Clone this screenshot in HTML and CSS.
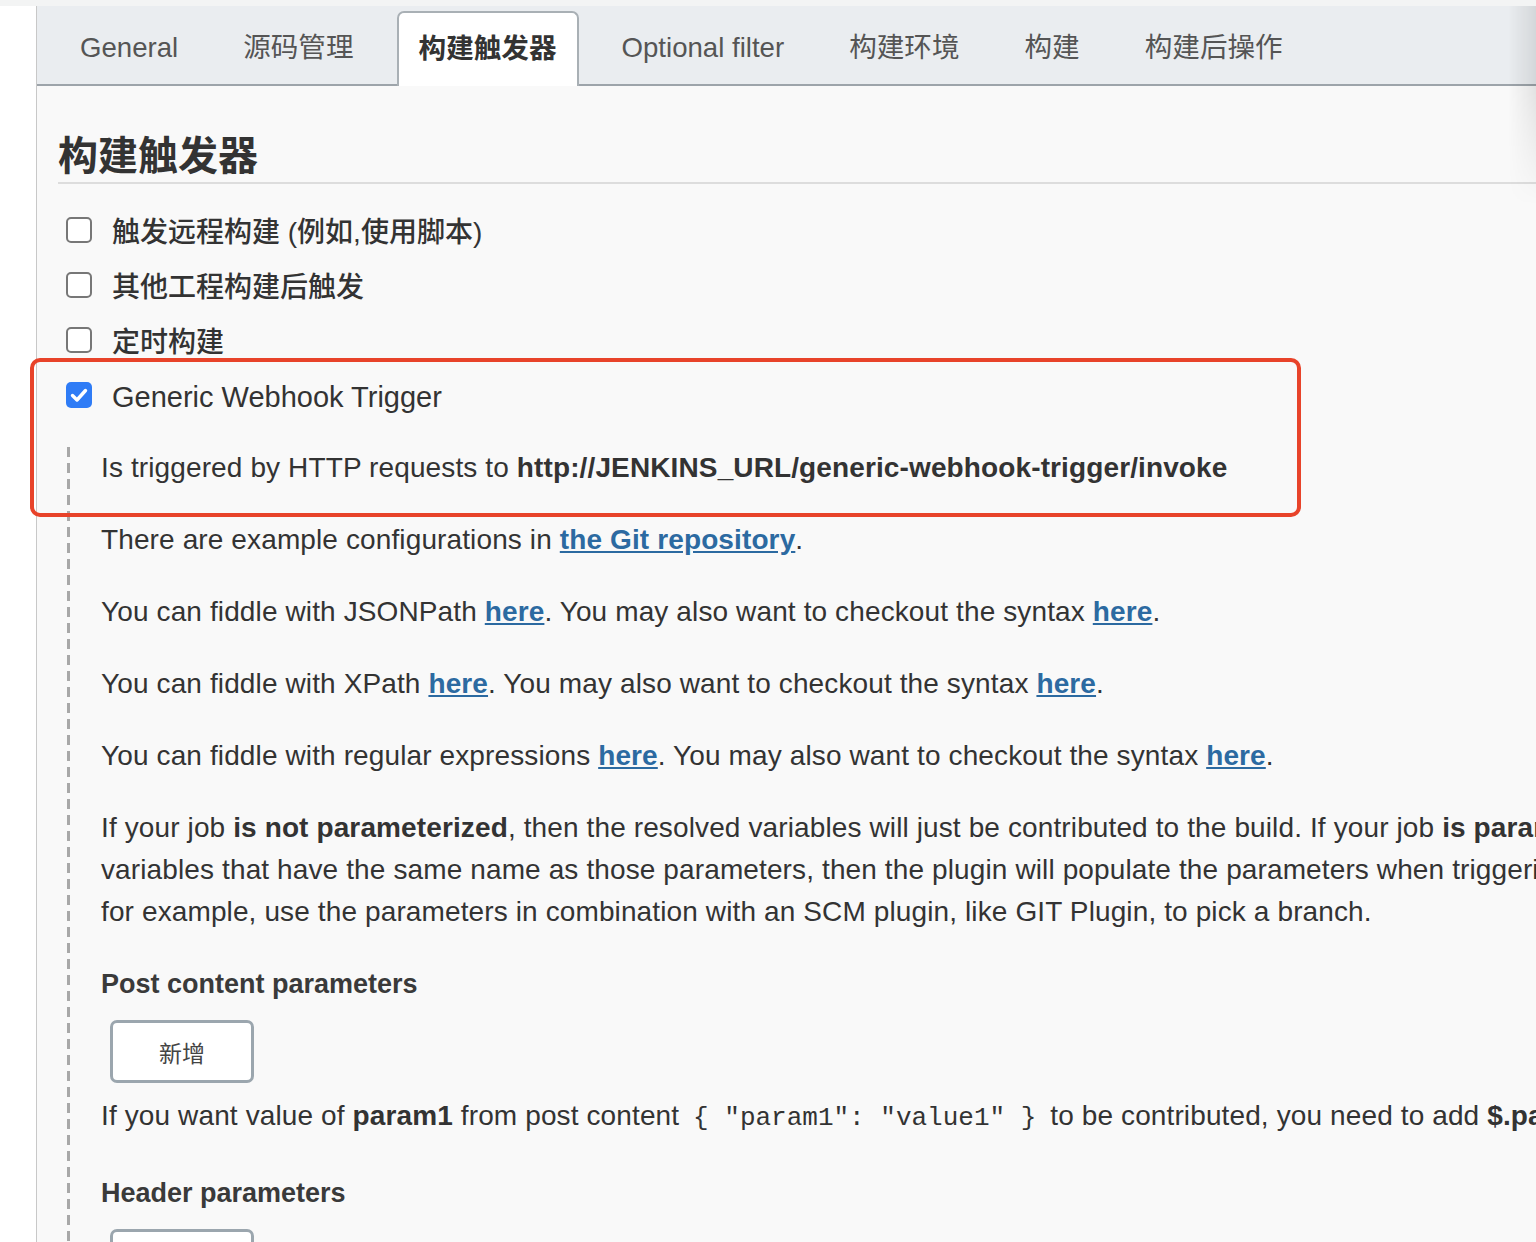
FILE: index.html
```html
<!DOCTYPE html>
<html lang="zh-CN">

<head>
    <meta charset="UTF-8">
    <meta name="viewport" content="width=device-width, initial-scale=1.0">
    <title>构建触发器</title>
    <link rel="stylesheet" href="styles.css">
</head>

<body>
    <div class="topbar"></div>
    <div class="page">
        <div class="tabs">
            <div class="tab">General</div>
            <div class="tab">源码管理</div>
            <div class="tab active">构建触发器</div>
            <div class="tab">Optional filter</div>
            <div class="tab">构建环境</div>
            <div class="tab">构建</div>
            <div class="tab">构建后操作</div>
        </div>

        <div class="content">
            <h2 class="section-title">构建触发器</h2>

            <div class="opts">
                <div class="opt">
                    <span class="check"></span>
                    <span class="opt-label">触发远程构建 (例如,使用脚本)</span>
                </div>
                <div class="opt">
                    <span class="check"></span>
                    <span class="opt-label">其他工程构建后触发</span>
                </div>
                <div class="opt">
                    <span class="check"></span>
                    <span class="opt-label">定时构建</span>
                </div>
                <div class="opt">
                    <span class="check checked">
                        <svg viewBox="0 0 26 26" width="26" height="26">
                            <path d="M6.5 13.5 L11 18 L19.5 8.5" fill="none" stroke="#fff" stroke-width="3.4" stroke-linecap="round" stroke-linejoin="round" />
                        </svg>
                    </span>
                    <span class="opt-label en">Generic Webhook Trigger</span>
                </div>
            </div>

            <div class="nested">
                <p>Is triggered by HTTP requests to <b>http://JENKINS_URL/generic-webhook-trigger/invoke</b></p>
                <p>There are example configurations in <a href="#">the Git repository</a>.</p>
                <p>You can fiddle with JSONPath <a href="#">here</a>. You may also want to checkout the syntax <a href="#">here</a>.</p>
                <p>You can fiddle with XPath <a href="#">here</a>. You may also want to checkout the syntax <a href="#">here</a>.</p>
                <p>You can fiddle with regular expressions <a href="#">here</a>. You may also want to checkout the syntax <a href="#">here</a>.</p>
                <p>If your job <b>is not parameterized</b>, then the resolved variables will just be contributed to the build. If your job <b>is parameterized</b>, and you resolve<br>variables that have the same name as those parameters, then the plugin will populate the parameters when triggering the job. That means you can,<br>for example, use the parameters in combination with an SCM plugin, like GIT Plugin, to pick a branch.</p>

                <h4 class="sub-title">Post content parameters</h4>
                <button class="btn">新增</button>
                <p class="after-btn">If you want value of <b>param1</b> from post content <code>{ "param1": "value1" }</code> to be contributed, you need to add <b>$.param1</b> as expression.</p>

                <h4 class="sub-title">Header parameters</h4>
                <button class="btn">新增</button>
            </div>
        </div>
        <div class="edge-shade"></div>
    </div>

    <!-- 红色标注框 -->
    <div class="mark"></div>
</body>

</html>
```

FILE: styles.css
```css
* {
    padding: 0;
    margin: 0;
    box-sizing: border-box;
}

body {
    background-color: #fff;
    font-family: "Liberation Sans", Arial, "Noto Sans CJK SC", sans-serif;
    color: #333;
    overflow: hidden;
    height: 1242px;
    position: relative;
}

.topbar {
    height: 6px;
    background-color: #f3f4f4;
}

.page {
    margin-left: 36px;
    border-left: 1px solid #c8c8c8;
    background-color: #f9f9f9;
    height: 1236px;
    position: relative;
    overflow: hidden;
}

/* 顶部标签 */
.tabs {
    display: flex;
    align-items: flex-end;
    gap: 21px;
    height: 80px;
    padding-left: 21px;
    background-color: #eaedf0;
    border-bottom: 2px solid #9da4aa;
}

.tab {
    height: 78px;
    line-height: 80px;
    padding: 0 22px;
    font-size: 27.6px;
    color: #555;
    margin-bottom: -2px;
    white-space: nowrap;
}

.tab.active {
    height: 75px;
    line-height: 72px;
    background-color: #fff;
    border: 2px solid #a9b0b5;
    border-bottom: none;
    border-radius: 7px 7px 0 0;
    color: #333;
    font-weight: bold;
    padding: 0 20px;
}

.content {
    padding: 44px 0 0 21px;
}

.section-title {
    font-size: 40px;
    font-weight: bold;
    color: #333;
    height: 54px;
    line-height: 52px;
    border-bottom: 2px solid #ddd;
}

.opts {
    margin-top: 18px;
}

.opt {
    display: flex;
    align-items: center;
    height: 55px;
    padding-left: 8px;
}

.check {
    width: 26px;
    height: 26px;
    border: 2px solid #777;
    border-radius: 5px;
    background-color: #fff;
    flex-shrink: 0;
}

.check.checked {
    border: none;
    background-color: #2f7cf6;
}

.check svg {
    display: block;
}

.opt-label {
    margin-left: 20px;
    font-size: 28px;
    font-weight: 500;
    color: #333;
}

.opt-label.en {
    font-size: 29px;
    line-height: 34px;
    padding-top: 4px;
}

/* 虚线缩进区域 */
.nested {
    margin-left: 9px;
    margin-top: 25px;
    padding-left: 34px;
    padding-bottom: 40px;
    position: relative;
}

.nested::before {
    content: "";
    position: absolute;
    left: 0;
    top: 0;
    bottom: 0;
    width: 3px;
    background: repeating-linear-gradient(to bottom, #a8a8a8 0, #a8a8a8 10px, transparent 10px, transparent 16px);
}

.nested p {
    font-size: 28px;
    letter-spacing: 0.12px;
    line-height: 42px;
    margin-bottom: 30px;
    white-space: nowrap;
}

.nested a {
    color: #2c6aa1;
    font-weight: bold;
    text-decoration: underline;
}

.nested code {
    font-family: "Liberation Mono", "Courier New", monospace;
    font-size: 26px;
    letter-spacing: 0;
    margin: 0 6px;
}

.sub-title {
    font-size: 27px;
    font-weight: bold;
    color: #3a3a3a;
    line-height: 42px;
    margin-bottom: 15px;
}

.btn {
    display: block;
    width: 144px;
    height: 63px;
    margin-left: 9px;
    background-color: #fff;
    border: 3px solid #9ba6ae;
    border-radius: 7px;
    font-family: "Noto Sans CJK SC", sans-serif;
    font-size: 23px;
    color: #444;
}

.nested p.after-btn {
    margin-top: 12px;
    margin-bottom: 33px;
}

.mark {
    position: absolute;
    left: 30px;
    top: 358px;
    width: 1271px;
    height: 159px;
    border: 4px solid #e8432a;
    border-radius: 10px;
}

.edge-shade {
    position: absolute;
    top: 0;
    right: 0;
    width: 28px;
    height: 200px;
    background: linear-gradient(to right, rgba(0, 0, 0, 0), rgba(0, 0, 0, 0.09));
    -webkit-mask-image: linear-gradient(to bottom, #000 40%, transparent);
    mask-image: linear-gradient(to bottom, #000 40%, transparent);
}
```
